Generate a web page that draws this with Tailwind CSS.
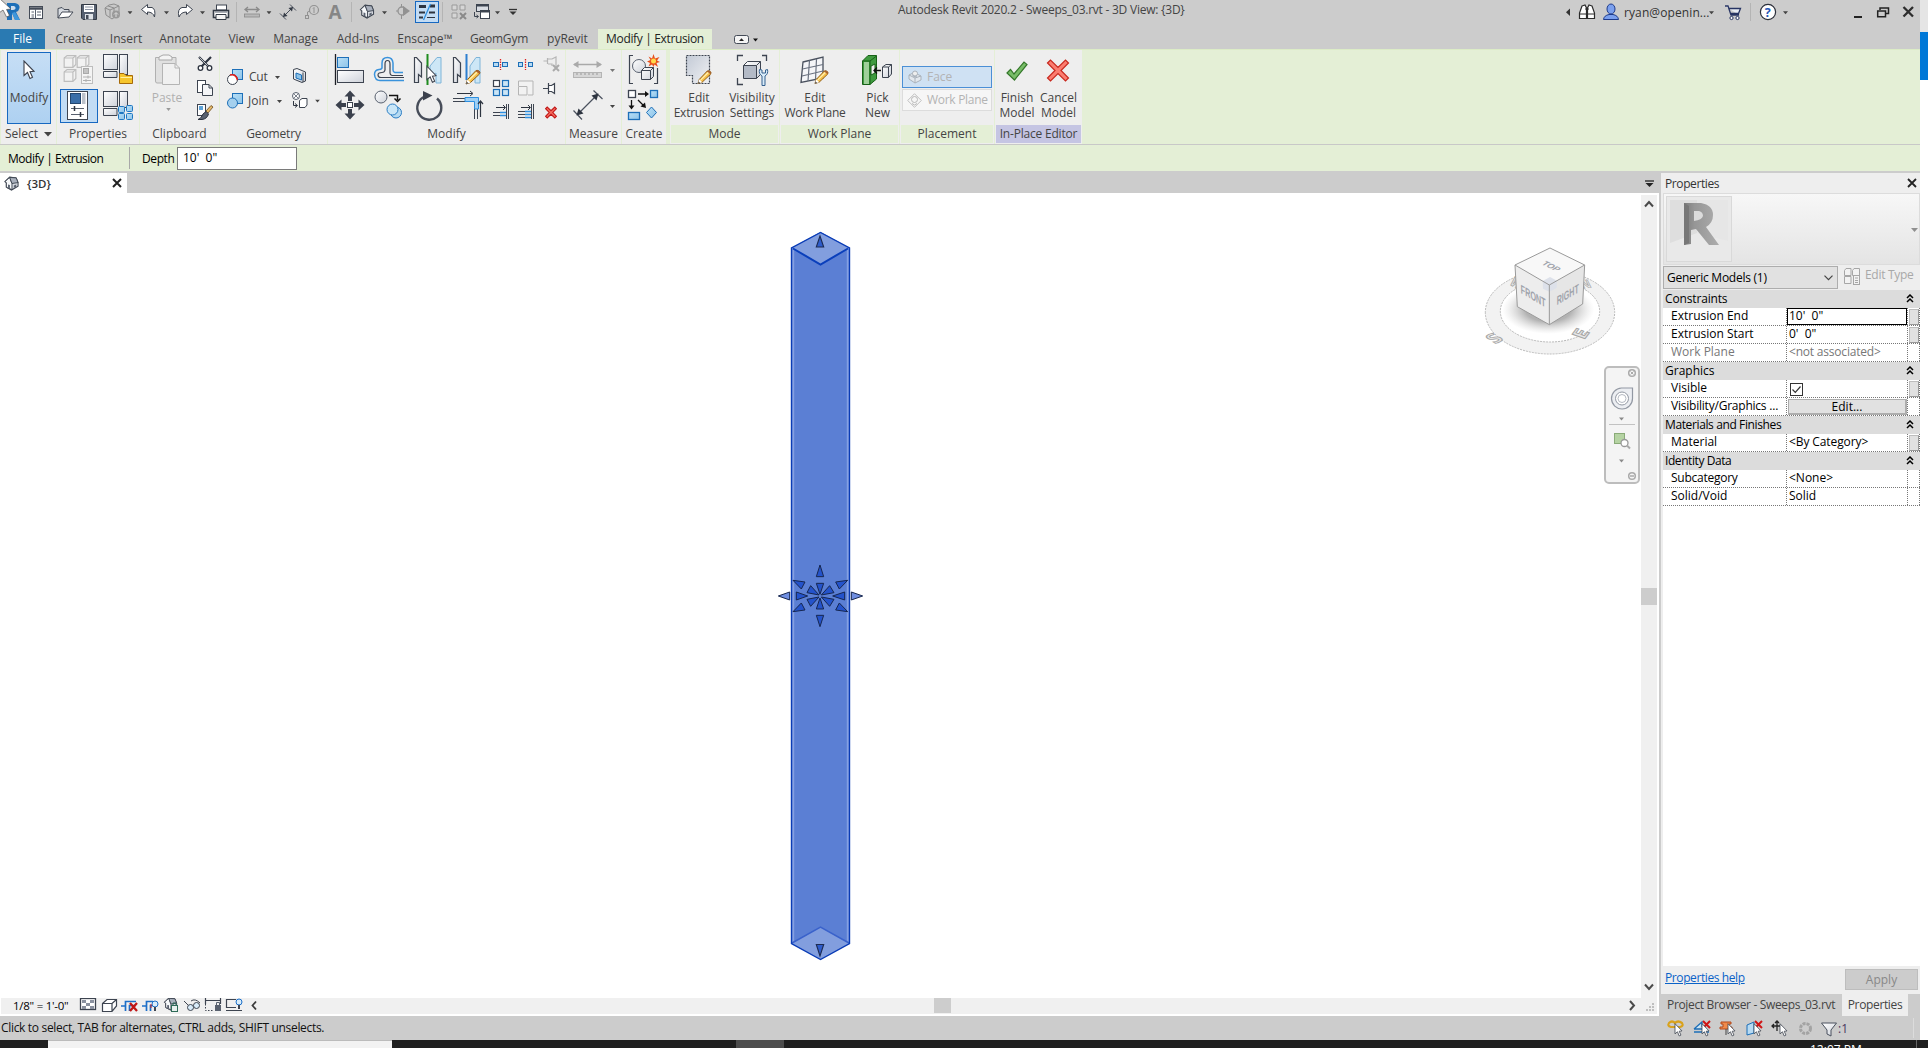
<!DOCTYPE html>
<html lang="en">
<head>
<meta charset="utf-8">
<title>Autodesk Revit 2020.2</title>
<script src="https://cdn.jsdelivr.net/npm/@tailwindcss/browser@4"></script>
</head>
<body class="w-[1928px] h-[1048px] overflow-hidden bg-white text-[12px] leading-4 text-[#333] font-['Open_Sans','Noto_Sans',sans-serif]">

<svg class="absolute w-0 h-0">
  <defs>
    <linearGradient id="gBox" x1="0" y1="0" x2="1" y2="1"><stop offset="0" stop-color="#fff"/><stop offset="1" stop-color="#ced2da"/></linearGradient>
    <linearGradient id="gBlue" x1="0" y1="0" x2="1" y2="1"><stop offset="0" stop-color="#b9e0f7"/><stop offset="1" stop-color="#8dc3e8"/></linearGradient>
    <linearGradient id="gGray" x1="0" y1="0" x2="1" y2="1"><stop offset="0" stop-color="#c3cad6"/><stop offset="1" stop-color="#f0f1f3"/></linearGradient>
    <linearGradient id="gR" x1="0" y1="0" x2="1" y2="0"><stop offset="0" stop-color="#7c7c7c"/><stop offset=".3" stop-color="#969696"/><stop offset="1" stop-color="#adadad"/></linearGradient>
    <symbol id="cursor" viewBox="0 0 12 20"><path d="M1 1V15.5L4.5 12.5L7 18.5L9.5 17.3L7 11.8L11 11.3Z" fill="#fff" stroke="#3b414d" stroke-width="1.1"/></symbol>
    <symbol id="pencil" viewBox="0 0 16 16"><path d="M1 15L2.5 10.500L11 1.500Q13 0.500 15 3L14.500 5L5.500 13.500Z" fill="#f7c04a" stroke="#8c5a14"/><path d="M11 1.500Q13 0.500 15 3L14.500 5L10.500 2.200Z" fill="#a9612f"/><path d="M4 11L12 3.200" stroke="#fff0b0" stroke-width="1.300"/><path d="M1 15L2.500 10.500L5.500 13.500Z" fill="#fff"/><path d="M1 15L1.800 12.800L3.300 14.300Z" fill="#333"/></symbol>
    <symbol id="cube" viewBox="0 0 12 12"><path d="M1 3L3.500 1H11V8.500L8.500 11H1Z" fill="#f2f2f2" stroke="#bdbdbd"/><path d="M1 3H8.500V11M8.500 3L11 1" fill="none" stroke="#bdbdbd"/></symbol>
    <symbol id="dd" viewBox="0 0 6 4"><path d="M0 0H6L3 3.500Z" fill="#444"/></symbol>
    <symbol id="house" viewBox="0 0 16 16"><path d="M1 6L6 1L13 2L15 7V11L8 15L2.500 12V7Z" fill="#d4d8df" stroke="#3d4450" stroke-width="1.100"/><path d="M1 6L6 1.500L8.500 8V14.500L2.500 12V7Z" fill="#f6f8fa" stroke="#3d4450" stroke-width="1"/><path d="M6 1.500L13 2L15 7L8.500 8Z" fill="#aab1bd" stroke="#3d4450"/><path d="M4.300 12.500V9L6.300 9.500V13.200M10.500 10L13 9V11.500L10.500 12.500Z" fill="#59616f"/></symbol>
    <symbol id="redx" viewBox="0 0 12 12"><path d="M1 2.500L2.500 1L6 4.300L9.500 1L11 2.500L7.700 6L11 9.500L9.500 11L6 7.700L2.500 11L1 9.500L4.300 6Z" fill="#f5695c" stroke="#c01616"/></symbol>
    <symbol id="chev2" viewBox="0 0 8 9"><path d="M1 4L4 1L7 4M1 8L4 5L7 8" fill="none" stroke="#000" stroke-width="1.500"/></symbol>
  </defs>
</svg>

<div class="flex h-[1040px]">
<div class="flex w-[1920px] flex-col bg-[#ccc]">

  <!-- title bar with quick access toolbar -->
  <header class="flex h-[29px] items-start">
    <svg class="h-[29px] w-[540px] shrink-0" viewBox="0 0 540 29">
      <path d="M7 3H15Q20 4 19.500 8Q19 11 16 12L20 20H15L12 13V20H7Z" fill="#1d6fb8"/><path d="M11 6H14Q16 6.500 15.500 8.500Q15 10 11 10Z" fill="#cde"/><path d="M12 13L15 12L20 20H15Z" fill="#3f97dc"/>
      <path d="M-1 -2V13L3 10L6.500 17L9.500 15.500L6.500 9.500L11 9Z" fill="#fff" stroke="#555" stroke-width=".7"/>
      <rect x="29.500" y="6.500" width="13" height="12" fill="#fff" stroke="#444b57"/><path d="M30 8.500H42" stroke="#444b57" stroke-width="2.500"/><path d="M35.500 9V18M31.500 12H34M31.500 15H34M37 12H41M37 15H41M31.500 17H34" stroke="#59616f"/>
      <path d="M58 18V8.500L62 7.500L64 9.500H69V12" fill="#d9dde3" stroke="#444b57"/><path d="M58 18L62 12H73L69 17Z" fill="#fff" stroke="#444b57"/>
      <path d="M81.500 4.500H96.500V19.500H83L81.500 18Z" fill="#566070" stroke="#333a45"/><rect x="84" y="5" width="10" height="7" fill="#fff"/><path d="M85 7H93M85 9.500H93" stroke="#8a93a3"/><rect x="85" y="14" width="8" height="5.500" fill="#dfe3e8"/><rect x="86" y="15" width="2.500" height="4" fill="#444b57"/>
      <path d="M105 8L109 5L114 4L119 6V14L112 19L106 15Z" fill="#c9c9c9" stroke="#8e8e8e"/><path d="M105 8L110 10V17M110 10L119 6M108 6L114 8V16" stroke="#8e8e8e" fill="none"/><circle cx="116" cy="14.500" r="4" fill="#999"/><path d="M114 14.500L116 12.500L118 14.500M116 13V17" stroke="#ddd" fill="none"/>
      <path d="M141.500 9.500L147.500 4.500V7.500H152Q156 9 154.500 17Q153 12 147.500 12V14.500Z" fill="#fff" stroke="#3d4450"/>
      <path d="M192.500 9.500L186.500 4.500V7.500H182Q177 9 179 17Q181 12 186.500 12V14.500Z" fill="#fff" stroke="#3d4450"/>
      <rect x="216.500" y="5" width="10" height="5" fill="#fff" stroke="#3d4450"/><path d="M213.500 10.500H228.500V17.500H213.500Z" fill="#fff" stroke="#333a45" stroke-width="1.600"/><path d="M216 14.500H226V19.500H216Z" fill="#f4f4f4" stroke="#333a45"/><path d="M215 12H227" stroke="#59616f"/>
      <path d="M236.500 2V22M351.500 2V22M442.500 2V22" stroke="#b4b4b4"/>
      <path d="M245 9.500H259M248 7L245 9.500L248 12M256 7L259 9.500L256 12" stroke="#8a8a8a" fill="none" stroke-width="1.300"/><rect x="244.500" y="14" width="15" height="3" fill="#b9b9b9" stroke="#8a8a8a" stroke-width=".8"/>
      <path d="M283 17L293 7M280 13.500L286 19.500M290 4.500L296 10.500" stroke="#444b57" fill="none"/><path d="M283 17L284 12.500L287.500 16ZM293 7L292 11.500L288.500 8Z" fill="#333a45"/>
      <circle cx="314" cy="10" r="4.500" fill="none" stroke="#929292" stroke-width="1.200"/><path d="M314 7.500V13M313 8.500L314 7.500M310 11L307.500 12V16" stroke="#929292" fill="none"/><rect x="305.500" y="15.500" width="3" height="3" fill="none" stroke="#929292"/>
      <text x="328.500" y="18.500" font-size="19" font-weight="700" fill="#868686">A</text>
      <use href="#house" x="359" y="4" width="16" height="15"/>
      <circle cx="402" cy="11" r="4" fill="none" stroke="#929292" stroke-width="1.300"/><path d="M396 11H398M401.500 4V7M401.500 15V19" stroke="#929292"/><path d="M403 6L410 11L403 16Z" fill="#929292"/>
      <rect x="415.500" y="1.500" width="23" height="21" fill="#c3dcf4" stroke="#1668c1"/><path d="M419 6.500H426M430 6H435" stroke="#2d3440" stroke-width="3"/><path d="M419 12.500H425M429 12.500H435M419 17.500H423" stroke="#2d3440" stroke-width="2"/><path d="M427 17.500H435" stroke="#2d3440"/><path d="M430.500 4L423.500 20" stroke="#2d8fe0" stroke-width="1.300"/>
      <path d="M452 5H457V10H452ZM460 5H465V10H460ZM452 13H457V18H452Z" fill="#d6d6d6" stroke="#9a9a9a"/><path d="M460 13L466 19M466 13L460 19" stroke="#8a8a8a" stroke-width="2"/>
      <rect x="476.500" y="4.500" width="12" height="7" fill="#d9dde3" stroke="#3d4450"/><path d="M476 5.500H489" stroke="#3d4450" stroke-width="2"/><rect x="480.500" y="10.500" width="9" height="8" fill="#fff" stroke="#3d4450"/><path d="M480 11.500H490" stroke="#3d4450" stroke-width="2"/><path d="M474.500 12V16.500H478M476.500 15L478.500 16.500L476.500 18" fill="none" stroke="#3d4450"/>
      <use href="#dd" x="127.500" y="11" width="5" height="4"/><use href="#dd" x="164" y="11" width="5" height="4"/><use href="#dd" x="200" y="11" width="5" height="4"/><use href="#dd" x="266.500" y="11" width="5" height="4"/><use href="#dd" x="382" y="11" width="5" height="4"/><use href="#dd" x="495" y="11" width="5" height="4"/>
      <path d="M509 9.500H517" stroke="#333" stroke-width="1.300"/><path d="M509.500 11.500H516.500L513 15Z" fill="#333"/>
    </svg>
    <div class="ml-[358px] mt-[2px] w-[668px] shrink-0 whitespace-pre tracking-[-0.24px] text-[#444]">Autodesk Revit 2020.2 - Sweeps_03.rvt - 3D View: {3D}</div>
    <svg class="h-[29px] w-[58px] shrink-0" viewBox="1566 0 58 29">
      <path d="M1570 8.500V16L1566 12.200Z" fill="#333"/>
      <path d="M1582 6L1585 5L1586.500 8V18.500H1579.500V13ZM1592 6L1589 5L1587.500 8V18.500H1594.500V13Z" fill="#fff" stroke="#2a2a2a" stroke-width="1.200"/><path d="M1580 14H1586M1588 14H1594M1585 9H1589" stroke="#2a2a2a"/>
      <ellipse cx="1611" cy="9" rx="4" ry="5" fill="#7ba0ee" stroke="#1d3a8a"/><path d="M1603.500 19.500Q1604 15.500 1609 14.500H1613Q1618 15.500 1618.500 19.500Z" fill="#7ba0ee" stroke="#1d3a8a"/>
    </svg>
    <div class="mt-[5px] w-[84px] shrink-0 whitespace-pre tracking-[0.1px]">ryan@openin...</div>
    <svg class="h-[29px] w-[212px] shrink-0" viewBox="1708 0 212 29">
      <use href="#dd" x="1709" y="11" width="5" height="4"/>
      <path d="M1725 6H1728L1731 15H1739M1729 8.500H1740.500L1738.500 13.500H1731" fill="#e8ecf4" stroke="#273463" stroke-width="1.300"/><circle cx="1731.500" cy="18" r="1.600" fill="#fff" stroke="#273463"/><circle cx="1737.500" cy="18" r="1.600" fill="#fff" stroke="#273463"/>
      <path d="M1750.500 3V21" stroke="#b4b4b4"/>
      <circle cx="1768" cy="12" r="7.600" fill="#fff" stroke="#2b2f3a" stroke-width="1.200"/><text x="1764.700" y="16.500" font-size="12.500" font-weight="700" fill="#2456b8">?</text>
      <use href="#dd" x="1783" y="11" width="5" height="4"/>
      <path d="M1854 17H1862" stroke="#222" stroke-width="2"/>
      <path d="M1880 10V8H1888.500V13.500H1886" fill="none" stroke="#222" stroke-width="1.500"/><path d="M1877.700 11H1885.500V16.700H1877.700Z" fill="none" stroke="#222" stroke-width="1.500"/><path d="M1903.500 7L1913 16.500M1913 7L1903.500 16.500" stroke="#2d2d2d" stroke-width="2.300"/>
    </svg>
  </header>

  <!-- ribbon tabs -->
  <nav class="flex h-5 items-stretch text-center leading-5 text-[#444]">
    <span class="w-[45px] bg-[#2a7ab2] text-white">File</span>
    <span class="ml-[2px] w-[54px]">Create</span>
    <span class="w-[50px]">Insert</span>
    <span class="w-[68px]">Annotate</span>
    <span class="w-[45px]">View</span>
    <span class="w-[63px]">Manage</span>
    <span class="w-[62px]">Add-Ins</span>
    <span class="w-[72px]">Enscape™</span>
    <span class="w-[76px] tracking-[-0.2px]">GeomGym</span>
    <span class="w-[61px]">pyRevit</span>
    <span class="w-[114px] bg-[#e4efd6] tracking-[-0.35px] text-[#222]">Modify | Extrusion</span>
    <svg class="ml-[20px] h-5 w-[30px]" viewBox="732 29 30 20"><rect x="734.500" y="35.500" width="14" height="8" rx="2" fill="#f4f4f4" stroke="#444b57"/><path d="M739 41L741.500 38.300L744 41Z" fill="#222"/><path d="M753 38.500H758L755.500 41.500Z" fill="#111"/></svg>
  </nav>

  <!-- ribbon -->
  <section class="flex h-[95px] items-start border-t border-[#dcecc6] bg-[#e4efd6] pl-[1px] text-center text-[#444]">
    <div class="h-[94px] w-[55px] bg-[#eee] pt-[2px]">
      <div class="ml-[6px] h-[72px] w-[44px] border border-[#1668c1] bg-gradient-to-b from-[#c6def5] to-[#aed1f1] pt-[7px]">
        <svg class="ml-[15px] h-[20px] w-[12px]"><use href="#cursor"/></svg>
        <div class="-mx-1 mt-[10px] leading-[15px]">Modify</div>
      </div>
      <div class="mt-[2px] flex items-center justify-center">Select<svg class="ml-[6px] h-[5px] w-[8px]" viewBox="0 0 8 5"><path d="M0 0H8L4 4.500Z" fill="#444"/></svg></div>
    </div>
    <div class="ml-[1px] h-[94px] w-[82px] bg-[#eee]">
      <svg class="h-[75px] w-[82px]" viewBox="57 50 82 75">
        <use href="#cube" x="63" y="54" width="14" height="15"/><use href="#cube" x="76" y="54" width="14" height="15"/><use href="#cube" x="63" y="68" width="14" height="15"/>
        <rect x="81.500" y="66.500" width="11" height="17" fill="#f4f4f4" stroke="#bdbdbd"/><rect x="83.500" y="68.500" width="5" height="5" fill="#c4c4c4" stroke="#aaa"/><path d="M83 77H91M83 80.500H91M88 75.500V78.500M86 79V82" stroke="#b0b0b0"/>
        <g fill="url(#gBox)" stroke="#3d4450"><rect x="103.500" y="54.500" width="14" height="15"/><rect x="119.500" y="54.500" width="8" height="20"/><path d="M103.500 71.500H117V77.500H103.500Z"/><rect x="103.500" y="91.500" width="14" height="15"/><rect x="119.500" y="91.500" width="8" height="16"/><path d="M103.500 108.500H117V115.500H103.500Z"/></g>
        <path d="M119.500 83.500V73.500H124L126 75.500H132.500V83.500Z" fill="#f6c52c" stroke="#a66a09"/><path d="M120.500 77.500H132" stroke="#fff0a0"/>
        <g fill="url(#gBlue)" stroke="#1d77c2"><rect x="118.500" y="106.500" width="6" height="6" rx="1"/><rect x="126.500" y="105.500" width="6" height="6" rx="1"/><rect x="118.500" y="113.500" width="6" height="6" rx="1"/><rect x="126.500" y="113.500" width="6" height="6" rx="1"/></g>
        <rect x="60.500" y="89.500" width="37" height="33" fill="#c2dcf4" stroke="#1668c1"/>
        <rect x="67.500" y="91.500" width="20" height="28" fill="#fff" stroke="#3d4450"/><rect x="70.500" y="93.500" width="10" height="10" fill="#3a6ea8" stroke="#23466f"/><rect x="82" y="93" width="3.500" height="11" fill="#bcc2cb"/><path d="M71 108.500H84M71 114.500H84" stroke="#59616f"/><path d="M74.500 106V111M80.500 112V117" stroke="#2d3440" stroke-width="1.500"/>
      </svg>
      <div class="mt-[1px]">Properties</div>
    </div>
    <div class="ml-[1px] h-[94px] w-[79px] bg-[#eee]">
      <div class="flex h-[75px]">
        <div class="w-[53px] text-[#b0b0b0]">
          <svg class="h-[40px] w-[53px]" viewBox="140 50 53 40"><path d="M155.500 57.500H176V83H157Q155.500 83 155.500 81Z" fill="#e0e0e0" stroke="#b0b0b0"/><path d="M159 60V57L163 55H169L172 57V60Z" fill="#f4f4f4" stroke="#a8a8a8"/><path d="M162.500 63.500H175L179.500 68V84.500H162.500Z" fill="#f0f0f0" stroke="#b4b4b4"/><path d="M175 63.500V68H179.500" fill="none" stroke="#b4b4b4"/></svg>
          <div class="ml-[1px] leading-[15px]">Paste</div>
          <svg class="ml-[26px] mt-[3px] h-[3px] w-[5px]" viewBox="0 0 6 4"><path d="M0 0H6L3 4Z" fill="#999"/></svg>
        </div>
        <svg class="h-[75px] w-[26px]" viewBox="193 50 26 75">
          <path d="M199 57L209 67M211 57L201 67" stroke="#2d3440" stroke-width="2.200"/><path d="M199.500 57.500L208 66" stroke="#e9ebee" stroke-width=".8"/><circle cx="200.500" cy="68" r="2.300" fill="#fff" stroke="#2d3440" stroke-width="1.300"/><circle cx="209.500" cy="68" r="2.300" fill="#fff" stroke="#2d3440" stroke-width="1.300"/>
          <rect x="197.500" y="80.500" width="8" height="12" fill="#fff" stroke="#3d4450"/><path d="M202.500 84.500H209L212.500 88V95.500H202.500Z" fill="#f4f5f7" stroke="#3d4450"/><path d="M209 84.500V88H212.500" fill="none" stroke="#3d4450"/>
          <rect x="197.500" y="104.500" width="8" height="11" fill="#fff" stroke="#3d4450"/><rect x="199" y="106" width="4" height="4" fill="#5ea3d8"/><path d="M206 111L211 105.500L213 107L208 113Z" fill="#e6b96a" stroke="#6b4a1b" stroke-width=".8"/><path d="M198 119.500Q201 119 203 114L206 111.500L208.500 114Q207 119 202 119.500Z" fill="#59616f" stroke="#2d3440"/>
        </svg>
      </div>
      <div class="mt-[1px]">Clipboard</div>
    </div>
    <div class="ml-[1px] h-[94px] w-[107px] bg-[#eee]">
      <div class="flex h-[75px]">
        <svg class="h-[75px] w-[28px]" viewBox="220 50 28 75"><rect x="232.500" y="69.500" width="10" height="10" fill="url(#gBlue)" stroke="#1d6fb8"/><circle cx="232.500" cy="79.500" r="5" fill="#fff" stroke="#3d4450"/><path d="M230 75Q236 73.500 237.500 80" fill="none" stroke="#e02020" stroke-width="1.600"/><rect x="232.500" y="93.500" width="10" height="10" fill="url(#gBlue)" stroke="#1d6fb8"/><circle cx="232.500" cy="103" r="5" fill="#a5d0ee" stroke="#1d6fb8"/></svg>
        <div class="w-[22px] pt-[19px] text-left"><div class="h-6 pl-[1px] tracking-[-0.2px]">Cut</div><div class="h-6">Join</div></div>
        <svg class="h-[75px] w-[57px]" viewBox="270 50 57 75"><use href="#dd" x="275" y="76" width="5" height="3.500"/><use href="#dd" x="277" y="100" width="5" height="3.500"/><use href="#dd" x="315" y="99.500" width="5" height="3.500"/>
          <path d="M293.500 69.500L297 68.500L305.500 72V81L302 82.500L293.500 79Z" fill="url(#gBox)" stroke="#3d4450"/><path d="M296 73L301.500 75V80L296 78Z" fill="#8dc3e8" stroke="#1d6fb8"/><path d="M303 72.500V82" stroke="#3d4450"/>
          <circle cx="296" cy="96" r="3.500" fill="#fff" stroke="#59616f"/><path d="M293.500 93.500L298.500 98.500M298.500 93.500L293.500 98.500" stroke="#59616f" stroke-width=".8"/><path d="M293.500 101V105.500H297M295 103.500L297.500 105.500L295 107.500" fill="none" stroke="#2d3440"/><path d="M299.500 100.500L302 98.500H307V105L305 107.500H299.500Z" fill="#fff" stroke="#3d4450"/></svg>
      </div>
      <div class="mt-[1px] tracking-[-0.15px]">Geometry</div>
    </div>
    <div class="ml-[1px] h-[94px] w-[237px] bg-[#eee]">
      <svg class="h-[75px] w-[237px]" viewBox="328 50 237 75">
        <path d="M335.500 54V85" stroke="#1c1f26" stroke-width="1.300"/><rect x="337.500" y="57.500" width="11" height="10" fill="url(#gBlue)" stroke="#1d6fb8"/><rect x="337.500" y="70.500" width="26" height="12" fill="url(#gBox)" stroke="#3d4450"/>
        <path d="M403 72.500H395Q393 72 393 70V63Q392.500 57.500 387.500 57.500Q382 57.500 382 63V68Q381 69.500 379 69.500Q374.500 70 374.500 74.500Q375 80.500 380 80.500H404" fill="none" stroke="#3a93dc" stroke-width="1.500"/><path d="M403 75.500H392Q390 75 390 73V64Q390 60.500 387.500 60.500Q385 60.500 385 64V70Q384.500 72.500 382 72.500Q378 72.500 378 75Q378 77.500 381 77.500H404" fill="none" stroke="#3d4450" stroke-width="1.200"/>
        <path d="M414.500 57.500H416.500L421.500 63V77L418.500 74.500V82.500H414.500Z" fill="url(#gBox)" stroke="#3d4450" stroke-width="1.200"/><path d="M441 57.500H437L430 66V77L436 73V83H441Z" fill="#cde7f6" stroke="#7eb4d8"/><path d="M427.500 54V85" stroke="#1f8c1f" stroke-width="2"/><use href="#cursor" x="426" y="65" width="11" height="19"/>
        <path d="M453.500 57.500H455.500L460.500 63V77L457.500 74.500V82.500H453.500Z" fill="url(#gBox)" stroke="#3d4450" stroke-width="1.200"/><path d="M480 57.500H476L470 66V77L475 73V83H480Z" fill="#cde7f6" stroke="#7eb4d8"/><path d="M466.500 54V80" stroke="#2d7fd0" stroke-width="2"/><use href="#pencil" x="465" y="69" width="16" height="16"/>
        <g fill="#b7daf2" stroke="#1d6fb8"><rect x="493.500" y="62.500" width="5" height="4"/><rect x="502.500" y="62.500" width="5" height="4"/><rect x="518.500" y="62.500" width="4" height="4"/><rect x="528.500" y="62.500" width="4" height="4"/></g><path d="M500.500 59V70M525.500 59V70" stroke="#d22" stroke-dasharray="1.500 1" stroke-width="1.300"/>
        <rect x="493.500" y="80.500" width="6" height="6" fill="#fff" stroke="#3d4450" stroke-width="1.200"/><g fill="#cbe5f6" stroke="#1d6fb8" stroke-width="1.200"><rect x="502.500" y="80.500" width="6" height="6"/><rect x="493.500" y="89.500" width="6" height="6"/><rect x="502.500" y="89.500" width="6" height="6"/></g>
        <path d="M518.500 86V81H533V95H528M518.500 86.500H527V95H518.500Z" fill="#f2f2f2" stroke="#b5b5b5"/>
        <g fill="none" stroke="#b5b5b5" stroke-width="1.200"><path d="M543.500 61H547.500M547.500 58V64M548 59H552L556 57V67M548 64H552V66"/></g><path d="M553 65L559 71M559 65L553 71" stroke="#aaa" stroke-width="2"/>
        <path d="M543 88.500H548M548.500 83V94M548.500 85.500H551.500L554.500 83.500V93.500L551.500 91.500H548.500" fill="#fff" stroke="#3d4450" stroke-width="1.200"/>
        <path d="M350 90.500L344.500 96.500H348V101H352V96.500H355.500ZM350 119.500L344.500 113.500H348V109H352V113.500H355.500ZM335.500 105L341.500 99.500V103H346V107H341.500V110.500ZM364.500 105L358.500 99.500V103H354V107H358.500V110.500Z" fill="#3b414d"/><rect x="347.500" y="102.500" width="5" height="5" fill="#fff" stroke="#3b414d"/>
        <circle cx="381" cy="97" r="6" fill="url(#gBox)" stroke="#59616f"/><path d="M389 95.500H397.500V100M394.500 98.500L397.500 101.500L400.500 98.500" fill="none" stroke="#111" stroke-width="1.500"/><circle cx="396" cy="112.500" r="5.500" fill="#b5daf2" stroke="#2b7dc4"/><circle cx="392.500" cy="109.500" r="5.500" fill="#cae6f7" stroke="#2b7dc4"/>
        <path d="M437 98.500A12 12 0 1 1 425 96.500" fill="none" stroke="#474d59" stroke-width="2.400"/><path d="M423 91L432.500 95.500L423 100.500Z" fill="#3b414d"/>
        <path d="M457 93.500H472M470 91L473 93.500L470 96" fill="none" stroke="#2d3440"/><path d="M453 98.500H465M453 101.500H465M474.500 109V119M477.500 109V119" stroke="#3d4450"/><path d="M465 97.500H478.500V109H474.500V101.500H465Z" fill="#9fd0f5" stroke="#2d8fe0"/><path d="M480.500 117V101M478 104L480.500 101L483 104" fill="none" stroke="#2d3440" stroke-width="1.200"/>
        <path d="M496 107.500H505M503 105L505.500 107.500L503 110" fill="none" stroke="#2d3440"/><path d="M493 112.500H500M493 115.500H500M506.500 104V119M508.500 104V119" stroke="#3d4450"/><path d="M500 112.500H506M500 115.500H506" stroke="#2d8fe0" stroke-width="1.500"/>
        <path d="M521 107.500H530M528 105L530.500 107.500L528 110" fill="none" stroke="#2d3440"/><path d="M518 111.500H525M518 114.500H525M518 117.500H525M531.500 104V119M533.500 104V119" stroke="#3d4450"/><path d="M525 111.500H531M525 114.500H531M525 117.500H531" stroke="#2d8fe0" stroke-width="1.500"/>
        <use href="#redx" x="544.500" y="106" width="13" height="13"/>
      </svg>
      <div class="mt-[1px]">Modify</div>
    </div>
    <div class="ml-[1px] h-[94px] w-[55px] bg-[#eee]">
      <svg class="h-[75px] w-[55px]" viewBox="566 50 55 75"><path d="M574 64.500H601" stroke="#a9a9a9" stroke-width="1.500"/><path d="M573 64.500L578.500 61V68ZM602 64.500L596.500 61V68Z" fill="#a9a9a9"/><rect x="573.500" y="72.500" width="28" height="5" fill="#d6d6d6" stroke="#b4b4b4"/><path d="M577 73V75M581 73V75M585 73V75M589 73V75M593 73V75M597 73V75" stroke="#999"/><use href="#dd" x="610" y="69" width="5" height="3.500" opacity=".7"/><use href="#dd" x="610" y="105" width="5" height="3.500"/><path d="M577 115L598 94M573.500 110.500L582 119.500M593.500 90.500L602.500 99" stroke="#4a515e" stroke-width="1.200"/><path d="M576.500 115.500L578.500 108.500L583.500 113.500ZM598.500 93.500L596.500 100.500L591.500 95.500Z" fill="#2d3440"/></svg>
      <div class="mt-[1px]">Measure</div>
    </div>
    <div class="ml-[1px] h-[94px] w-[44px] bg-[#eee]">
      <svg class="h-[75px] w-[44px]" viewBox="622 50 44 75"><path d="M633 55.500H629.500V83.500H633M657.500 68V83.500H654" fill="none" stroke="#3d4450" stroke-width="1.200"/><circle cx="639" cy="66" r="6.500" fill="url(#gBox)" stroke="#59616f"/><path d="M641.500 70.500L644.500 67.500H653.500V76.500L650.500 79.500H641.500ZM641.500 70.500H650.500V79.500M650.500 70.500L653.500 67.500" fill="url(#gBox)" stroke="#3d4450"/><path d="M653.500 54L655 58.500L659.500 57L657 60.500L660 62L656.500 63L658 67L654.500 64.500L653.500 67L652 64.500L648.500 66.500L650 63L647 61.500L650.500 60L648.500 56.500L652 58.500Z" fill="#e8501c"/><circle cx="653.500" cy="61" r="2.500" fill="#ffd94a"/>
      <rect x="628.500" y="90.500" width="7" height="7" fill="#fff" stroke="#3d4450" stroke-width="1.300"/><rect x="650.500" y="90.500" width="7" height="7" fill="url(#gBlue)" stroke="#1d6fb8" stroke-width="1.300"/><rect x="628.500" y="112.500" width="11" height="7" fill="url(#gBlue)" stroke="#1d6fb8" stroke-width="1.300"/><path d="M651.500 107L656.500 112.500L651.500 118L646.500 112.500Z" fill="url(#gBlue)" stroke="#1d6fb8"/><path d="M638 94H646M631.500 100V107M638 100L644 106" stroke="#111" stroke-width="1.300"/><path d="M645 91L649 94L645 97ZM628.500 105.500H634.500L631.500 109.500ZM646 108L640.500 106.500L645 102.500Z" fill="#111"/></svg>
      <div class="mt-[1px]">Create</div>
    </div>
    <div class="ml-[4px] h-[94px] w-[109px] bg-[#eee]">
      <div class="flex h-[75px] leading-[15px]">
        <div class="w-[57px] pl-[1px]"><svg class="-ml-[1px] h-[40px] w-[57px]" viewBox="670 50 57 40"><path d="M686.500 55.500H709.500V83.500H692.500V75.500H686.500Z" fill="url(#gGray)" stroke="#3d4450" stroke-width="1.200" stroke-dasharray="2 1"/><use href="#pencil" x="697" y="69" width="15" height="16"/></svg>Edit<br><span class="-mx-1 tracking-[-0.25px]">Extrusion</span></div>
        <div class="w-[50px]"><svg class="h-[40px] w-[50px]" viewBox="727 50 50 40"><path d="M743 55.500H737.500V61M762 55.500H766.500V61M737.500 78V84.500H743" fill="none" stroke="#3d4450" stroke-width="1.300"/><path d="M743.500 65.500L747.500 61.500H760.500V74.500L756.500 78.500H743.500Z" fill="url(#gBox)" stroke="#3d4450"/><path d="M744 66H756V78H744Z" fill="#b3bac6"/><path d="M743.500 65.500H756.500V78.500M756.500 65.500L760.500 61.500" fill="none" stroke="#3d4450"/><path d="M759.500 69.500Q758.500 74 762 76V85.500H765V76Q768.500 74 767.500 69.500L765.500 70V73H762V70Z" fill="#d8ebf8" stroke="#35618f"/></svg>Visibility<br>Settings</div>
      </div>
      <div class="mx-[1px] h-[18px] bg-[#e4efd6] pt-[1px]">Mode</div>
    </div>
    <div class="ml-[1px] h-[94px] w-[119px] bg-[#eee]">
      <div class="flex h-[75px] leading-[15px]">
        <div class="w-[70px]"><svg class="h-[40px] w-[70px]" viewBox="780 50 70 40"><path d="M803 62L823 57V78L801 82.500Z" fill="#f4f5f8" stroke="#4a515e" stroke-width="1.300"/><path d="M809.500 60.500L808 81M816.500 59L815.500 79.500M802.500 69L823 64.500M802 76L823 71" stroke="#6a7280" stroke-width="1.200"/><use href="#pencil" x="814" y="69" width="15" height="16"/></svg>Edit<br><span class="-mx-1 tracking-[-0.25px]">Work Plane</span></div>
        <div class="mt-[2px] ml-[3px] h-[72px] w-[1px] bg-[#c4c4c4]"></div>
        <div class="w-[48px] pl-[1px]"><svg class="-ml-[1px] h-[40px] w-[48px]" viewBox="854 50 48 40"><path d="M863.500 61L869 55.500H877.500V79L871 84.500H863.500Z" fill="#3f9a3f" stroke="#176117"/><path d="M863.500 61H871L877.500 56M871 61V84.500" fill="none" stroke="#176117"/><path d="M865 62H870V84H865Z" fill="#9fd09a"/><path d="M872 66L876 64V73L872 75Z" fill="#eee" stroke="#176117"/><path d="M875 70.500H882M878 67.500L875 70.500L878 73.500" fill="none" stroke="#111" stroke-width="1.300"/><path d="M883.500 67L887 64.500H892.500V74L889.500 77.500H883.500ZM883.500 67H889.500V77.500M889.500 67L892.500 64.500" fill="url(#gBox)" stroke="#3d4450"/></svg>Pick<br>New</div>
      </div>
      <div class="mx-[1px] h-[18px] bg-[#e4efd6] pt-[1px]">Work Plane</div>
    </div>
    <div class="ml-[1px] h-[94px] w-[94px] bg-[#eee]">
      <div class="h-[75px] pt-[16px] pl-[2px] text-left text-[#b3b3b3]">
        <div class="flex h-[22px] w-[90px] items-center border border-[#4b8fd6] bg-[#cfe1f3] pl-[5px]"><svg class="mr-[5px] h-[14px] w-[14px]" viewBox="0 0 14 14"><path d="M1 5L5 3V6L8 7L9 4L13 6V10L7 13L1 9ZM1 5L7 8V13M7 8L13 6" fill="#e3e8ee" stroke="#aab2bb"/><circle cx="7" cy="3.500" r="2.500" fill="#eee" stroke="#aab2bb"/></svg>Face</div>
        <div class="mt-[1px] flex h-[22px] w-[90px] items-center border border-[#dcdcdc] bg-[#f6f6f6] pl-[4px] tracking-[-0.3px]"><svg class="mr-[5px] h-[15px] w-[15px] shrink-0" viewBox="0 0 15 15"><path d="M7.500 .700L14.300 7.500L7.500 14.300L.700 7.500Z" fill="none" stroke="#c0c0c0"/><circle cx="7.500" cy="6.500" r="3" fill="none" stroke="#b8b8b8"/><path d="M5 10.500L7.500 12L10 10.500" fill="none" stroke="#b8b8b8"/></svg><span class="whitespace-nowrap">Work Plane</span></div>
      </div>
      <div class="mx-[1px] h-[18px] bg-[#e4efd6] pt-[1px]">Placement</div>
    </div>
    <div class="ml-[1px] h-[94px] w-[87px] bg-[#eee]">
      <div class="flex h-[75px] pl-[1px] leading-[15px]">
        <div class="w-[42px]"><svg class="h-[40px] w-[42px]" viewBox="996 50 42 40"><path d="M1007 73L1010.500 69.500L1014 74L1024 62L1027 64.500L1014.500 80Z" fill="#78bd68" stroke="#35782b" stroke-width="1.200"/></svg>Finish<br>Model</div>
        <div class="w-[41px]"><svg class="h-[40px] w-[41px]" viewBox="1038 50 41 40"><path d="M1047.500 63L1050.500 60L1058 67.500L1065.500 60L1068.500 63L1061 70.500L1068.500 78L1065.500 81L1058 73.500L1050.500 81L1047.500 78L1055 70.500Z" fill="#fb7d70" stroke="#c8281e" stroke-width="1.200"/></svg>Cancel<br>Model</div>
      </div>
      <div class="mx-[1px] h-[18px] bg-[#c5c5e3] pt-[1px] tracking-[-0.2px] whitespace-nowrap">In-Place Editor</div>
    </div>
  </section>

  <!-- options bar -->
  <section class="flex h-[27px] items-center border-t border-[#c8c8c8] bg-[#e4efd6] text-black">
    <span class="w-[129px] pl-[8px] pt-[1px] tracking-[-0.48px]">Modify | Extrusion</span>
    <span class="h-[22px] w-[1px] bg-[#a8a8a8]"></span>
    <span class="w-[47px] pl-[12px] pt-[1px] tracking-[-0.4px]">Depth</span>
    <span class="h-[23px] w-[120px] border border-[#7a7a7a] bg-white pl-[5px] pt-[2px] whitespace-pre">10'  0"</span>
  </section>

  <div class="flex h-[845px]">
    <main class="flex w-[1659px] flex-col">
      <!-- view tabs -->
      <div class="flex h-[22px] items-end">
        <div class="flex h-5 w-[127px] items-center bg-white pl-[4px] font-semibold text-[#333]">
          <svg class="h-[15px] w-[15px]"><use href="#house"/></svg><span class="ml-[8px] w-[85px] pt-[1px] text-[11.500px]">{3D}</span>
          <svg class="h-[10px] w-[10px]" viewBox="0 0 10 10"><path d="M1 1L9 9M9 1L1 9" stroke="#222" stroke-width="2"/></svg>
        </div>
        <svg class="mb-[5px] ml-[1518px] h-[8px] w-[9px]" viewBox="0 0 9 8"><path d="M0 1H9" stroke="#222" stroke-width="1.300"/><path d="M0.500 3H8.500L4.500 7Z" fill="#222"/></svg>
      </div>
      <!-- drawing area -->
      <div class="flex h-[805px] bg-white">
        <svg class="h-[805px] w-[1641px]" viewBox="0 193 1641 805">
          <path d="M791.500 248V943.500L820.500 959.500L849.500 943.500V248L820.500 232Z" fill="#5b7fd4"/>
          <path d="M791.500 248L820.500 232L849.500 248L820.500 265ZM791.500 943.500L820.500 927L849.500 943.500L820.500 959.500Z" fill="#829ede"/>
          <path d="M793.200 249V942M847.800 249V942" stroke="#85a0e2" stroke-width="2"/>
          <path d="M792 943L820.500 927L849 943" fill="none" stroke="#3a62cb" stroke-width="1.500"/>
          <path d="M793 248.500L820.500 264.500L848 248.500" fill="none" stroke="#0a3fbb" stroke-width="2"/>
          <path d="M791.500 248V943.500L820.500 959.500L849.500 943.500V248L820.500 232.500Z" fill="none" stroke="#0a3cb6" stroke-width="1.400"/>
          <g transform="translate(760 540) scale(.33333)" fill="#2453cb" stroke="#16264f" stroke-width="3">
            <path d="M180 75L169 110H191ZM180 260L169 226H191ZM143 168L109 156V180ZM218 168L254 156V180ZM169 130H191L180 163ZM169 207H191L180 174Z"/>
            <path d="M99 121L135 126L124 147ZM263 121L227 126L238 147ZM99 215L135 210L124 189ZM263 215L227 210L238 189ZM177 165L152 137L141 158ZM184 165L209 137L222 158ZM177 171L152 199L141 178ZM184 171L209 199L222 178Z"/>
            <path d="M55 168L89 156V180ZM308 168L274 156V180Z" fill="#6f8ee0"/>
          </g>
          <path d="M820 236L816.300 247H823.700ZM820 956L816.300 944.500H823.700Z" fill="#2e5ccb" stroke="#1c2b52" stroke-width="1.100"/>

          <!-- view cube -->
          <g transform="translate(1460 160) scale(.33333)">
            <radialGradient id="sh"><stop offset=".5" stop-color="#999" stop-opacity=".75"/><stop offset="1" stop-color="#ccc" stop-opacity="0"/></radialGradient>
            <path fill-rule="evenodd" d="M76 457A194 125 0 1 0 464 457A194 125 0 1 0 76 457ZM121 454A149 92 0 1 0 419 454A149 92 0 1 0 121 454Z" fill="#f2f2f2" stroke="#b8b8b8" stroke-width="3" stroke-dasharray="6 3"/>
            <ellipse cx="265" cy="448" rx="138" ry="74" fill="url(#sh)"/>
            <g fill="#e6e6e6" stroke="#a6a6a6" stroke-width="3" font-size="54" font-weight="700"><text transform="matrix(.95 -.45 .9 .55 106 552)">S</text><text transform="matrix(.6 -.8 1 .35 372 540)">E</text><text transform="matrix(.6 .35 -.5 .6 146 372)">W</text><text transform="matrix(.7 -.1 .3 .6 366 386)">N</text></g>
            <path d="M165 315L270 264L374 315L268 375Z" fill="#f8f8f8"/><path d="M165 315L268 375V494L172 440Z" fill="#ededed"/><path d="M374 315L268 375V494L368 432Z" fill="#e6e6e6"/>
            <path d="M248 363L270 351L291 362L290 384L268 395L249 386Z" fill="#dde1ea"/>
            <path d="M165 315L270 264L374 315L268 375ZM165 315L172 440L268 494L368 432L374 315M268 375V494" fill="none" stroke="#9a9a9a" stroke-width="3"/>
            <g fill="#9fa3ab" font-weight="700" font-family="Liberation Sans"><text transform="matrix(.8 .4 -.75 .5 243 312)" font-size="29">TOP</text><text transform="matrix(.82 .48 .03 1 182 399)" font-size="37" textLength="92" lengthAdjust="spacingAndGlyphs">FRONT</text><text transform="matrix(.84 -.5 0 1 290 436)" font-size="37" textLength="79" lengthAdjust="spacingAndGlyphs">RIGHT</text></g>
          </g>
          <!-- navigation bar -->
          <rect x="1605" y="367" width="34" height="116" rx="4" fill="#f4f4f4" stroke="#bdbdbd" stroke-width="2"/>
          <circle cx="1632" cy="373" r="3.300" fill="none" stroke="#aaa" stroke-width="1.500"/><path d="M1630.500 371.500L1633.500 374.500M1633.500 371.500L1630.500 374.500" stroke="#aaa"/>
          <circle cx="1632" cy="476" r="3.300" fill="none" stroke="#aaa" stroke-width="1.500"/><path d="M1630 476H1634" stroke="#aaa" stroke-width="1.500"/>
          <path d="M1632.500 388H1621.500A10.500 10.500 0 1 0 1632.500 398.500Z" fill="#eceef2" stroke="#9298a3" stroke-width="1.200"/><circle cx="1622" cy="398.500" r="6.500" fill="#fff" stroke="#9298a3"/><circle cx="1622" cy="398.500" r="4" fill="none" stroke="#b4b9c2"/>
          <path d="M1619 417.500H1624L1621.500 420.500ZM1619 459.500H1624L1621.500 462.500Z" fill="#8a8a8a"/><path d="M1609 424.500H1635" stroke="#c2c2c2"/>
          <rect x="1614.500" y="433.500" width="10" height="10" fill="#b5d3a3" stroke="#8aab78"/><circle cx="1624.500" cy="443" r="3.500" fill="#fff" stroke="#999" stroke-width="1.300"/><path d="M1627 445.500L1630 448.500" stroke="#aaa" stroke-width="2"/>
        </svg>
        <div class="mt-[2px] flex w-4 flex-col items-center bg-[#f0f0f0] pt-[5px]">
          <svg class="h-[8px] w-[10px]" viewBox="0 0 10 8"><path d="M1 6.500L5 2L9 6.500" fill="none" stroke="#4a4a4a" stroke-width="2"/></svg>
          <div class="mt-[380px] h-[17px] w-4 bg-[#cdcdcd]"></div>
          <svg class="mt-[378px] h-[8px] w-[10px]" viewBox="0 0 10 8"><path d="M1 1.500L5 6L9 1.500" fill="none" stroke="#4a4a4a" stroke-width="2"/></svg>
        </div>
      </div>
      <!-- view control bar -->
      <div class="flex h-[18px] items-start bg-white pl-[1px] text-black">
        <div class="flex h-4 w-[1640px] bg-[#f0f0f0]">
          <span class="w-[77px] pl-[12px] text-[11.500px] leading-[15px] tracking-[-0.25px] whitespace-nowrap">1/8" = 1'-0"</span>
          <svg class="h-4 w-[184px]" viewBox="78 998 184 16">
            <rect x="80.500" y="998.500" width="15" height="11" fill="#fff" stroke="#3d4450" stroke-width="1.300"/><path d="M82 1000H86V1003H90V1000H94V1003H90V1006H94V1009H90V1006H86V1009H82V1006H86V1003H82Z" fill="#8b92a0"/>
            <path d="M102.500 1003.500L107 999.500H116.500V1006L112 1011.500H102.500ZM102.500 1003.500H112V1011.500M112 1003.500L116.500 999.500" fill="#fff" stroke="#3d4450" stroke-width="1.200"/>
            <path d="M121 1006H125M125.500 1011V1001.500H136M129.500 1011V1005.500H136" fill="none" stroke="#1d6fc8" stroke-width="1.700"/><path d="M130 1003L137 1011M137 1003L130 1011" stroke="#c01616" stroke-width="2.300"/>
            <path d="M142 1006H146M146.500 1011V1001.500H153M150.500 1011V1005.500H153" fill="none" stroke="#1d6fc8" stroke-width="1.700"/><circle cx="155" cy="1004" r="3" fill="#d8ecfa" stroke="#1d6fc8"/><path d="M155 1007V1011" stroke="#3d4450" stroke-width="2"/><path d="M151 1004V1008" stroke="#c22"/>
            <use href="#house" x="163" y="997" width="15" height="14"/><rect x="171.500" y="1005.500" width="6" height="6" fill="#e8f0ee" stroke="#2d6b58"/><path d="M173 1005V1003H176V1005" fill="none" stroke="#2d6b58"/>
            <path d="M184 1001L189 1006M191 1001Q195 998 200 1003" fill="none" stroke="#3d4450"/><circle cx="190.500" cy="1007.500" r="3" fill="#d8ecfa" stroke="#3d4450"/><circle cx="196.500" cy="1005.500" r="3" fill="#d8ecfa" stroke="#3d4450"/>
            <path d="M205.500 998V1004M220.500 998V1004M206 1000.500H220" stroke="#3d4450" stroke-width="1.200"/><path d="M205.500 1004V1010.500H214" fill="none" stroke="#3d4450" stroke-dasharray="1.500 1.500"/><rect x="215" y="1005" width="6" height="6" fill="#59616f"/><path d="M216.500 1005V1002.500H219.500V1005" fill="none" stroke="#59616f"/>
            <path d="M236 999.500H226.500V1007.500H236M226 1010.500H242" fill="none" stroke="#3d4450" stroke-width="1.200"/><circle cx="239" cy="1002" r="3" fill="#d8ecfa" stroke="#1d6fc8"/><path d="M239 1005V1009" stroke="#3d4450" stroke-width="2"/>
            <path d="M256 1001.500L252.500 1005.500L256 1009.500" fill="none" stroke="#3d3d3d" stroke-width="1.800"/>
          </svg>
          <div class="ml-[672px] h-[15px] w-[17px] bg-[#cdcdcd]"></div>
          <svg class="ml-[676px] h-4 w-[14px]" viewBox="1627 998 14 16"><path d="M1630 1001L1634 1005.500L1630 1010" fill="none" stroke="#4a4a4a" stroke-width="2"/></svg>
        </div>
        <svg class="h-4 w-4 bg-[#f0f0f0]" viewBox="1641 998 16 16"><path d="M1652 1004H1654M1649 1007H1651M1652 1007H1654M1646 1010H1648M1649 1010H1651M1652 1010H1654" stroke="#bfbfbf" stroke-width="2"/></svg>
      </div>
    </main>

    <!-- properties palette -->
    <aside class="ml-[2px] flex w-[259px] flex-col pt-[2px] text-black">
      <div class="flex h-5 items-center justify-between bg-[#eee] pl-[4px] pr-[3px] text-[#333]"><span class="pt-[1px] tracking-[-0.4px]">Properties</span><svg class="h-[10px] w-[10px]" viewBox="0 0 10 10"><path d="M1 1L9 9M9 1L1 9" stroke="#222" stroke-width="1.800"/></svg></div>
      <div class="h-[97px] bg-[#eee] pl-[2px]">
        <div class="flex h-[72px] w-[257px] items-start justify-between border border-[#dcdcdc] bg-gradient-to-b from-[#f7f7f7] to-[#e4e4e4] pl-[2px] pt-[2px]">
          <svg class="h-[66px] w-[66px] border border-[#d9d9d9]" viewBox="0 0 64 64"><rect width="64" height="64" fill="#e9e9e9"/><path d="M3 3H30V36L3 46Z" fill="#dedede"/><path d="M30 3H61V44L30 36Z" fill="#e6e6e6"/><path d="M17 6H34Q46 8 46 18Q46 26 39 30L52 48H42L29 32L24 33V47L17 48Z" fill="url(#gR)"/><path d="M27 14H32Q36 15 36 19Q35 23 27 24Z" fill="#dcdcdc"/><path d="M17 6L22 9V46L17 48Z" fill="#777"/></svg>
          <svg class="mt-[32px] mr-[1px] h-[4px] w-[7px]" viewBox="0 0 7 4"><path d="M0 0H7L3.500 4Z" fill="#8f8f8f"/></svg>
        </div>
        <div class="mt-[1px] flex">
          <div class="flex h-[23px] w-[175px] items-center justify-between border border-[#adadad] bg-[#e1e1e1] pl-[3px] pr-[4px] tracking-[-0.25px]">Generic Models (1)<svg class="h-[6px] w-[9px]" viewBox="0 0 9 6"><path d="M.5 .7L4.500 4.700L8.500 .7" fill="none" stroke="#444" stroke-width="1.200"/></svg></div>
          <svg class="ml-[6px] mt-[2px] h-[17px] w-[17px]" viewBox="0 0 17 17"><g fill="#f2f2f2" stroke="#a6a6a6"><path d="M.5 2.500L2 .500H7V7.500H.500ZM8.500 2.500L10 .500H15.500V7.500H8.500ZM.500 8.500H7V15.500H.500Z"/><rect x="9.500" y="7.500" width="6" height="9"/><path d="M11 10H14M11 12.500H14M11 14.500H14"/></g></svg>
          <span class="ml-[4px] mt-[1px] text-[#a8a8a8] tracking-[-0.3px]">Edit Type</span>
        </div>
      </div>
      <div class="h-[676px] border-l-2 border-[#eee] bg-white leading-[15px]">
        <div class="flex h-[18px] items-center justify-between bg-[#dcdcdc] pb-[2px] pl-[2px] pr-[6px] tracking-[-0.15px]">Constraints<svg class="mt-[1px] h-[9px] w-[8px]"><use href="#chev2"/></svg></div>
        <div class="flex h-[18px] border-b border-dotted border-[#777]"><span class="w-[124px] border-r border-dotted border-[#777] pl-[8px]">Extrusion End</span><span class="h-[17px] w-[120px] border border-black pl-[1px] leading-[14px] whitespace-pre">10'  0"</span><span class="w-[13px] border-x border-dotted border-[#777] pl-[1px] pt-[1px]"><i class="block h-[16px] w-[10px] border border-[#bdbdbd] border-r-[#999] border-b-[#999] bg-[#e1e1e1]"></i></span></div>
        <div class="flex h-[18px] border-b border-dotted border-[#777]"><span class="w-[124px] border-r border-dotted border-[#777] pl-[8px]">Extrusion Start</span><span class="w-[120px] pl-[2px] whitespace-pre">0'  0"</span><span class="w-[13px] border-x border-dotted border-[#777] pl-[1px] pt-[1px]"><i class="block h-[16px] w-[10px] border border-[#bdbdbd] border-r-[#999] border-b-[#999] bg-[#e1e1e1]"></i></span></div>
        <div class="flex h-[18px] border-b border-dotted border-[#777] text-[#777]"><span class="w-[124px] border-r border-dotted border-[#777] pl-[8px]">Work Plane</span><span class="w-[120px] pl-[2px] tracking-[-0.2px]">&lt;not associated&gt;</span><span class="w-[13px] border-x border-dotted border-[#777]"></span></div>
        <div class="flex h-[18px] items-center justify-between bg-[#dcdcdc] pb-[2px] pl-[2px] pr-[6px]">Graphics<svg class="mt-[1px] h-[9px] w-[8px]"><use href="#chev2"/></svg></div>
        <div class="flex h-[18px] border-b border-dotted border-[#777]"><span class="w-[124px] border-r border-dotted border-[#777] pl-[8px]">Visible</span><span class="w-[120px] pl-[3px] pt-[3px]"><svg class="h-[13px] w-[13px]" viewBox="0 0 13 13"><rect x=".5" y=".5" width="12" height="12" fill="#fff" stroke="#333"/><path d="M2.500 6.500L5.300 9.300L10.500 3.500" fill="none" stroke="#333" stroke-width="1.200"/></svg></span><span class="w-[13px] border-x border-dotted border-[#777] pl-[1px] pt-[1px]"><i class="block h-[16px] w-[10px] border border-[#bdbdbd] border-r-[#999] border-b-[#999] bg-[#e1e1e1]"></i></span></div>
        <div class="flex h-[18px] border-b border-dotted border-[#777]"><span class="w-[124px] border-r border-dotted border-[#777] pl-[8px] whitespace-nowrap tracking-[-0.22px]">Visibility/Graphics ...</span><span class="w-[120px] pl-[1px] pt-[1px]"><span class="block h-[16px] border border-[#adadad] border-r-2 border-b-2 bg-[#e1e1e1] text-center leading-[13px]">Edit...</span></span><span class="w-[13px] border-x border-dotted border-[#777]"></span></div>
        <div class="flex h-[18px] items-center justify-between bg-[#dcdcdc] pb-[2px] pl-[2px] pr-[6px] tracking-[-0.38px]">Materials and Finishes<svg class="mt-[1px] h-[9px] w-[8px]"><use href="#chev2"/></svg></div>
        <div class="flex h-[18px] border-b border-dotted border-[#777]"><span class="w-[124px] border-r border-dotted border-[#777] pl-[8px]">Material</span><span class="w-[120px] pl-[2px] tracking-[-0.1px]">&lt;By Category&gt;</span><span class="w-[13px] border-x border-dotted border-[#777] pl-[1px] pt-[1px]"><i class="block h-[16px] w-[10px] border border-[#bdbdbd] border-r-[#999] border-b-[#999] bg-[#e1e1e1]"></i></span></div>
        <div class="flex h-[18px] items-center justify-between bg-[#dcdcdc] pb-[2px] pl-[2px] pr-[6px] tracking-[-0.42px]">Identity Data<svg class="mt-[1px] h-[9px] w-[8px]"><use href="#chev2"/></svg></div>
        <div class="flex h-[18px] border-b border-dotted border-[#777]"><span class="w-[124px] border-r border-dotted border-[#777] pl-[8px] tracking-[-0.25px]">Subcategory</span><span class="w-[120px] pl-[2px]">&lt;None&gt;</span><span class="w-[13px] border-x border-dotted border-[#777]"></span></div>
        <div class="flex h-[18px] border-b border-dotted border-[#777]"><span class="w-[124px] border-r border-dotted border-[#777] pl-[8px]">Solid/Void</span><span class="w-[120px] pl-[2px]">Solid</span><span class="w-[13px] border-x border-dotted border-[#777]"></span></div>
      </div>
      <div class="flex h-[28px] items-start justify-between bg-[#eee] pl-[4px] pr-[2px] pt-[3px]"><span class="mt-[1px] text-[#0a62c8] underline tracking-[-0.4px]">Properties help</span><span class="h-[21px] w-[73px] border border-[#bdbdbd] bg-[#ccc] text-center leading-[19px] text-[#888]">Apply</span></div>
      <div class="flex h-[22px] leading-[21px] text-[#444]"><span class="w-[181px] pl-[6px] tracking-[-0.34px] whitespace-nowrap">Project Browser - Sweeps_03.rvt</span><span class="w-[66px] bg-[#eee] text-center tracking-[-0.35px]">Properties</span></div>
    </aside>
  </div>

  <!-- status bar -->
  <footer class="flex h-6 items-center justify-between pl-[1px] text-[#111]">
    <span class="tracking-[-0.32px] whitespace-nowrap">Click to select, TAB for alternates, CTRL adds, SHIFT unselects.</span>
    <div class="flex">
      <svg class="h-6 w-[173px]" viewBox="1665 1016 173 24">
        <path d="M1669 1023Q1672 1020 1675 1023Q1678 1020 1682 1023Q1684 1026 1680 1027H1671Q1667 1026 1669 1023Z" fill="none" stroke="#d9a21b" stroke-width="2.200"/><use href="#cursor" x="1674" y="1023" width="9" height="14"/>
        <path d="M1694 1029L1702 1022V1027M1694 1032H1709M1694 1029H1702" fill="#cde7f6" stroke="#1d6fb8" stroke-width="1.300"/><path d="M1703 1021L1710 1028M1710 1021L1703 1028" stroke="#d01616" stroke-width="2"/><use href="#cursor" x="1701" y="1023" width="9" height="14"/>
        <path d="M1721 1022H1731V1024H1729V1027H1732V1029H1720V1027H1723V1024H1721Z" fill="#f08a4a" stroke="#b3491a"/><path d="M1726 1029V1035" stroke="#444"/><use href="#cursor" x="1727" y="1023" width="9" height="14"/>
        <path d="M1747 1025L1754 1022V1033L1747 1035Z" fill="#b7daf2" stroke="#1d6fb8"/><path d="M1755 1021L1762 1028M1762 1021L1755 1028" stroke="#d01616" stroke-width="2"/><use href="#cursor" x="1753" y="1023" width="9" height="14"/>
        <path d="M1772 1026H1782M1777 1021V1031M1775 1023L1777 1021L1779 1023M1774 1024L1772 1026L1774 1028" fill="none" stroke="#222" stroke-width="1.300"/><use href="#cursor" x="1779" y="1023" width="9" height="14"/>
        <circle cx="1805.500" cy="1028.500" r="5" fill="none" stroke="#a3a3a3" stroke-width="3" stroke-dasharray="3 1"/>
        <path d="M1821.500 1023H1836.500L1831 1030V1036L1827 1034V1030Z" fill="url(#gBox)" stroke="#4a515e"/>
      </svg>
      <span class="w-[75px] pt-[5px] text-[#4a3560]">:1</span>
      <span class="my-[2px] w-[7px] border-l border-[#dcdcdc]"></span>
    </div>
  </footer>
</div>

<!-- window edge behind the application -->
<div class="flex w-[8px] flex-col"><div class="h-[32px] bg-[#e5e5e5]"></div><div class="h-[48px] bg-[#0078d7]"></div></div>
</div>

<!-- taskbar -->
<div class="flex h-[8px] overflow-hidden bg-[#1f1f1f]">
  <div class="ml-[48px] w-[344px] border-t border-[#bbb] bg-[#f2f2f2]"></div>
  <div class="ml-[344px] w-[48px] bg-[#4d4d4d]"></div>
  <div class="ml-[1026px] mt-[2px] w-[106px] text-white">12:07 PM</div>
  <div class="w-[1px] bg-[#666]"></div>
</div>
</body>
</html>
